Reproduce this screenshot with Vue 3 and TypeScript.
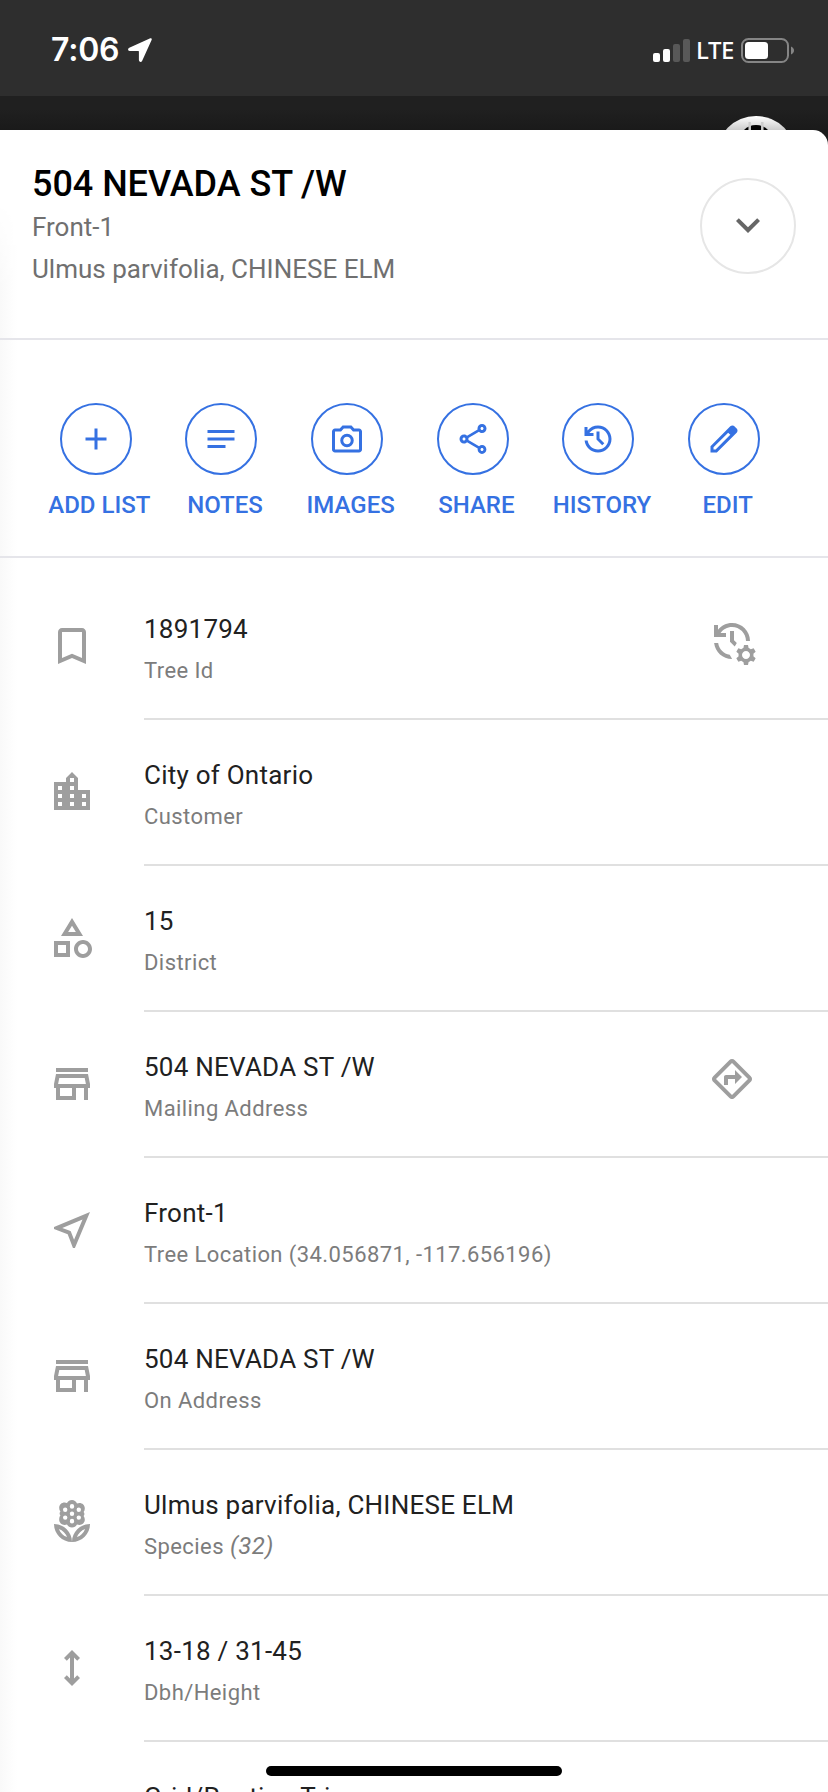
<script setup lang="ts">
interface Action {
  label: string
  icon: string
}

interface Row {
  icon: string
  value: string
  label: string
  note?: string
  trailing?: string
}

const icons: Record<string, string> = {
  add: 'M19 13h-6v6h-2v-6H5v-2h6V5h2v6h6v2z',
  notes: 'M21 11H3v2h18zM3 16h12v2H3zM21 6H3v2h18z',
  camera:
    'M12 17.5q1.875 0 3.188-1.312Q16.5 14.875 16.5 13q0-1.875-1.312-3.188Q13.875 8.5 12 8.5q-1.875 0-3.188 1.312Q7.5 11.125 7.5 13q0 1.875 1.312 3.188Q10.125 17.5 12 17.5Zm0-2q-1.05 0-1.775-.725Q9.5 14.05 9.5 13q0-1.05.725-1.775.725-.725 1.775-.725 1.05 0 1.775.725.725.725.725 1.775 0 1.05-.725 1.775-.725.725-1.775.725ZM4 21q-.825 0-1.412-.587Q2 19.825 2 19V7q0-.825.588-1.412Q3.175 5 4 5h3.15L9 3h6l1.85 2H20q.825 0 1.413.588Q22 6.175 22 7v12q0 .825-.587 1.413Q20.825 21 20 21Zm0-2h16V7h-4.05l-1.825-2h-4.25L8.05 7H4v12Z',
  share:
    'M18 16.08c-.76 0-1.44.3-1.96.77L8.91 12.7c.05-.23.09-.46.09-.7s-.04-.47-.09-.7l7.05-4.11c.54.5 1.25.81 2.04.81 1.66 0 3-1.34 3-3s-1.34-3-3-3-3 1.34-3 3c0 .24.04.47.09.7L8.04 9.81C7.5 9.31 6.79 9 6 9c-1.66 0-3 1.34-3 3s1.34 3 3 3c.79 0 1.5-.31 2.04-.81l7.12 4.16c-.05.21-.08.43-.08.65 0 1.61 1.31 2.92 2.92 2.92s2.92-1.31 2.92-2.92-1.31-2.92-2.92-2.92zM18 4c.55 0 1 .45 1 1s-.45 1-1 1-1-.45-1-1 .45-1 1-1zM6 13c-.55 0-1-.45-1-1s.45-1 1-1 1 .45 1 1-.45 1-1 1zm12 7.02c-.55 0-1-.45-1-1s.45-1 1-1 1 .45 1 1-.45 1-1 1z',
  history:
    'M12 3C9.17 3 6.65 4.32 5 6.36V4H3v6h6V8H6.26C7.53 6.19 9.63 5 12 5c3.86 0 7 3.14 7 7s-3.14 7-7 7c-3.53 0-6.43-2.61-6.92-6H3.06c.5 4.5 4.31 8 8.94 8 4.97 0 9-4.03 9-9s-4.03-9-9-9zM11 7v5.4l3.8 3.8 1.4-1.4-3.2-3.2V7z',
  edit:
    'M5 19h1.425L16.2 9.225 14.775 7.8 5 17.575ZM3 21v-4.25L16.2 3.575q.3-.275.663-.425.362-.15.762-.15t.775.15q.375.15.65.45L20.425 5q.3.275.437.65.138.375.138.75 0 .4-.138.763-.137.362-.437.662L7.25 21Z',
  bookmark:
    'M17 3H7c-1.1 0-1.99.9-1.99 2L5 21l7-3 7 3V5c0-1.1-.9-2-2-2zm0 15l-5-2.18L7 18V5h10v13z',
  city:
    'M15 11V5l-3-3-3 3v2H3v14h18V11h-6zm-8 8H5v-2h2v2zm0-4H5v-2h2v2zm0-4H5V9h2v2zm6 8h-2v-2h2v2zm0-4h-2v-2h2v2zm0-4h-2V9h2v2zm0-4h-2V5h2v2zm6 12h-2v-2h2v2zm0-4h-2v-2h2v2z',
  category:
    'M12 2l-5.5 9h11L12 2zm0 3.84L13.93 9h-3.87L12 5.84zM17.5 13c-2.49 0-4.5 2.01-4.5 4.5s2.01 4.5 4.5 4.5 4.5-2.01 4.5-4.5-2.01-4.5-4.5-4.5zm0 7c-1.38 0-2.5-1.12-2.5-2.5s1.12-2.5 2.5-2.5 2.5 1.12 2.5 2.5-1.12 2.5-2.5 2.5zM3 21.5h8v-8H3v8zm2-6h4v4H5v-4z',
  store:
    'M18.36 9l.6 3H5.04l.6-3h12.72M20 4H4v2h16V4zm0 3H4l-1 5v2h1v6h10v-6h4v6h2v-6h1v-2l-1-5zM6 18v-4h6v4H6z',
  near:
    'M17.27 6.73l-4.24 10.13-1.32-3.42-.32-.83-.82-.32-3.43-1.33 10.13-4.23M21 3L3 10.53v.98l6.84 2.65L12.48 21h.98L21 3z',
  florist:
    'M12 22c4.97 0 9-4.03 9-9-4.97 0-9 4.03-9 9zm2.44-2.44c.71-1.9 2.22-3.42 4.12-4.12-.71 1.9-2.22 3.41-4.12 4.12zM3 13c0 4.97 4.03 9 9 9 0-4.97-4.03-9-9-9zm2.44 2.44c1.9.71 3.42 2.22 4.12 4.12-1.9-.71-3.41-2.22-4.12-4.12zM5.6 10.75c0 1.6 1.2 2.7 2.7 2.7.4 0 .8-.1 1.2-.25.5.9 1.4 1.5 2.5 1.5s2-.6 2.5-1.5c.4.15.8.25 1.2.25 1.5 0 2.7-1.1 2.7-2.7 0-.7-.2-1.3-.6-1.8.3-.3.4-.6.4-.95s-.1-.65-.4-.95c.4-.5.6-1.1.6-1.8 0-1.6-1.2-2.7-2.7-2.7-.4 0-.8.1-1.2.25C14 1.6 13.1 1 12 1s-2 .6-2.5 1.5c-.4-.15-.8-.25-1.2-.25-1.5 0-2.7 1.1-2.7 2.7 0 .7.2 1.3.6 1.8-.3.3-.4.6-.4.95s.1.65.4.95c-.4.5-.6 1.1-.6 1.8zM12 3a1.1 1.2 0 1 0 0 2.4a1.1 1.2 0 1 0 0-2.4zM12 10.4a1.1 1.2 0 1 0 0 2.4a1.1 1.2 0 1 0 0-2.4zM12 6.8a1.1 1.1 0 1 0 0 2.2a1.1 1.1 0 1 0 0-2.2zM8.6 4.8a1.1 1.1 0 1 0 0 2.2a1.1 1.1 0 1 0 0-2.2zM15.4 4.8a1.1 1.1 0 1 0 0 2.2a1.1 1.1 0 1 0 0-2.2zM8.6 8.7a1.1 1.1 0 1 0 0 2.2a1.1 1.1 0 1 0 0-2.2zM15.4 8.7a1.1 1.1 0 1 0 0 2.2a1.1 1.1 0 1 0 0-2.2z',
  height:
    'M12 21l-4-4 1.4-1.4 1.6 1.6V6.8L9.4 8.4 8 7l4-4 4 4-1.4 1.4L13 6.8v10.4l1.6-1.6L16 17Z',
  manage:
    'M22.69 18.37l1.14-1-1-1.73-1.45.49c-.32-.27-.68-.48-1.08-.63L20 14h-2l-.3 1.49c-.4.15-.76.36-1.08.63l-1.45-.49-1 1.73 1.14 1c-.08.5-.08.76 0 1.26l-1.14 1 1 1.73 1.45-.49c.32.27.68.48 1.08.63L18 24h2l.3-1.49c.4-.15.76-.36 1.08-.63l1.45.49 1-1.73-1.14-1c.08-.51.08-.77 0-1.27zM19 21c-1.1 0-2-.9-2-2s.9-2 2-2 2 .9 2 2-.9 2-2 2zM11 7v5.41l2.36 2.36 1.04-1.79L13 11.59V7h-2zM21 12c0-4.97-4.03-9-9-9-2.83 0-5.35 1.32-7 3.36V4H3v6h6V8H6.26C7.53 6.19 9.63 5 12 5c3.86 0 7 3.14 7 7h2zM10.86 18.91C7.87 18.42 5.51 16.01 5.08 13H3.06c.5 4.5 4.31 8 8.94 8h.07l-1.21-2.09z',
  directions:
    'M8 15h2v-3h3.5v2.5L17 11l-3.5-3.5V10H9q-.425 0-.712.287Q8 10.575 8 11Zm4 7q-.375 0-.737-.15-.363-.15-.663-.45l-8-8q-.3-.3-.45-.663Q2 12.375 2 12t.15-.738q.15-.362.45-.662l8-8q.3-.3.663-.45Q11.625 2 12 2t.738.15q.362.15.662.45l8 8q.3.3.45.662.15.363.15.738t-.15.737q-.15.363-.45.663l-8 8q-.3.3-.662.45-.363.15-.738.15ZM12 20l8-8-8-8-8 8Z',
  chevron: 'M16.59 8.59L12 13.17 7.41 8.59 6 10l6 6 6-6z',
}

const actions: Action[] = [
  { label: 'ADD LIST', icon: 'add' },
  { label: 'NOTES', icon: 'notes' },
  { label: 'IMAGES', icon: 'camera' },
  { label: 'SHARE', icon: 'share' },
  { label: 'HISTORY', icon: 'history' },
  { label: 'EDIT', icon: 'edit' },
]

const rows: Row[] = [
  { icon: 'bookmark', value: '1891794', label: 'Tree Id', trailing: 'manage' },
  { icon: 'city', value: 'City of Ontario', label: 'Customer' },
  { icon: 'category', value: '15', label: 'District' },
  { icon: 'store', value: '504 NEVADA ST /W', label: 'Mailing Address', trailing: 'directions' },
  { icon: 'near', value: 'Front-1', label: 'Tree Location (34.056871, -117.656196)' },
  { icon: 'store', value: '504 NEVADA ST /W', label: 'On Address' },
  { icon: 'florist', value: 'Ulmus parvifolia, CHINESE ELM', label: 'Species', note: '(32)' },
  { icon: 'height', value: '13-18 / 31-45', label: 'Dbh/Height' },
  { icon: '', value: 'Grid/Routing Trim', label: '' },
]
</script>

<template>
  <div class="phone">
    <header class="status">
      <div class="clock">
        <span class="time">7:06</span>
        <svg class="locate" viewBox="0 0 24 24">
          <path d="M22.3.3L1.3 9.8C-.5 10.6-.3 12.9 1.7 12.9h8.7c.3 0 .5.2.5.5v8.7c0 2 2.4 2.6 3.3.7l9.4-20.7C24.2.9 23.3-.1 22.3.3z" />
        </svg>
      </div>
      <div class="signals">
        <svg class="bars" viewBox="0 0 37 23">
          <rect x="0" y="14" width="7" height="9" rx="2" />
          <rect x="10" y="10" width="7" height="13" rx="2" />
          <rect class="dim" x="20" y="5" width="7" height="18" rx="2" />
          <rect class="dim" x="30" y="0" width="7" height="23" rx="2" />
        </svg>
        <span class="lte">LTE</span>
        <svg class="battery" viewBox="0 0 53 25">
          <rect class="shell" x="1" y="1" width="46" height="23" rx="6.5" />
          <rect x="4" y="4" width="23" height="17" rx="3.5" />
          <path class="nub" d="M50 8.5c4 1.5 4 6.5 0 8z" />
        </svg>
      </div>
    </header>

    <div class="backdrop">
      <div class="avatar">
        <svg viewBox="0 0 80 80">
          <circle cx="40" cy="26" r="17" />
          <path d="M33.700 6v40M46.300 6v40" />
        </svg>
      </div>
    </div>

    <main class="sheet">
      <section class="head">
        <div class="titles">
          <h1>504 NEVADA ST /W</h1>
          <p>Front-1</p>
          <p>Ulmus parvifolia, CHINESE ELM</p>
        </div>
        <button class="collapse" aria-label="Collapse">
          <svg viewBox="0 0 24 24"><path :d="icons.chevron" /></svg>
        </button>
      </section>

      <nav class="actions">
        <div v-for="a in actions" :key="a.label" class="action">
          <span class="ring">
            <svg viewBox="0 0 24 24"><path :d="icons[a.icon]" fill-rule="evenodd" /></svg>
          </span>
          <span class="caption">{{ a.label }}</span>
        </div>
      </nav>

      <ul class="list">
        <li v-for="(r, i) in rows" :key="i" class="row">
          <svg class="lead" viewBox="0 0 24 24"><path :d="icons[r.icon] || ''" fill-rule="evenodd" /></svg>
          <div class="body">
            <div class="text">
              <span class="value">{{ r.value }}</span>
              <span class="label">{{ r.label }}<em v-if="r.note">{{ r.note }}</em></span>
            </div>
            <svg v-if="r.trailing" class="trail" viewBox="0 0 24 24">
              <path :d="icons[r.trailing]" fill-rule="evenodd" />
            </svg>
          </div>
        </li>
      </ul>
    </main>
    <div class="home"></div>
  </div>
</template>

<style>
html,
body {
  margin: 0;
  overflow: hidden;
}
</style>

<style scoped>
.phone {
  position: relative;
  display: flex;
  flex-direction: column;
  width: 828px;
  height: 1792px;
  overflow: hidden;
  background: #1b1b1b;
  font-family: Roboto, 'Liberation Sans', sans-serif;
}
svg {
  display: block;
  flex: none;
}
.status {
  display: flex;
  justify-content: space-between;
  box-sizing: border-box;
  height: 96px;
  padding: 0 34px 0 50px;
  background: #2e2e2e;
  color: #fff;
  font-family: Inter, sans-serif;
}
.clock,
.signals {
  display: flex;
  align-items: center;
  height: 100px;
}
.time {
  width: 77px;
  padding-left: 1px;
  font-size: 32px;
  font-weight: 600;
  line-height: 40px;
  letter-spacing: -0.2px;
}
.locate {
  width: 24px;
  height: 24px;
  fill: #fff;
}
.bars {
  width: 37px;
  height: 23px;
  margin-right: 6px;
  fill: #fff;
}
.bars .dim {
  fill: #585858;
}
.lte {
  width: 45px;
  font-family: 'Noto Sans', sans-serif;
  font-size: 24px;
  font-weight: 500;
  line-height: 30px;
  letter-spacing: -0.4px;
}
.battery {
  width: 53px;
  height: 25px;
  fill: #fff;
}
.battery .shell {
  fill: none;
  stroke: #858585;
  stroke-width: 2;
}
.battery .nub {
  fill: #858585;
}
.backdrop {
  display: flex;
  justify-content: flex-end;
  box-sizing: border-box;
  height: 34px;
  padding: 20px 32px 0 0;
  background: linear-gradient(#202020 40%, #1a1a1a);
}
.avatar {
  width: 80px;
  height: 80px;
  border-radius: 50%;
  background: linear-gradient(#fff, #ccc 14px);
}
.avatar circle {
  fill: #000;
}
.avatar path {
  fill: none;
  stroke: #ccc;
  stroke-width: 2.5;
}
.sheet {
  position: relative;
  flex: 1;
  overflow: hidden;
  border-top-right-radius: 15px;
  background: #fff;
}
.sheet::before {
  content: '';
  position: absolute;
  top: 70px;
  bottom: 0;
  left: 0;
  width: 17px;
  background: linear-gradient(90deg, #f9f9f9, #fff);
  -webkit-mask-image: linear-gradient(transparent, #000 90px);
  mask-image: linear-gradient(transparent, #000 90px);
}
.head {
  position: relative;
  display: flex;
  justify-content: space-between;
  box-sizing: border-box;
  height: 210px;
  padding: 32px 32px 0;
  border-bottom: 2px solid #e5e5ea;
}
h1 {
  margin: 1px 0 0;
  font-size: 36px;
  font-weight: 500;
  line-height: 42px;
  letter-spacing: -0.05px;
  color: #000;
}
.titles p {
  margin: 2px 0 0;
  font-size: 26px;
  line-height: 40px;
  color: #707070;
}
.collapse {
  display: flex;
  align-items: center;
  justify-content: center;
  box-sizing: border-box;
  width: 96px;
  height: 96px;
  margin-top: 16px;
  padding: 0 0 2px;
  border: 2px solid #e6e6e6;
  border-radius: 50%;
  background: #fff;
}
.collapse svg {
  width: 48px;
  height: 48px;
  fill: #666;
}
.actions {
  position: relative;
  display: grid;
  grid-template-columns: repeat(6, 1fr);
  box-sizing: border-box;
  height: 218px;
  padding: 63px 41px 0 33px;
  border-bottom: 2px solid #e5e5ea;
}
.action {
  display: flex;
  flex-direction: column;
  align-items: center;
  color: #3571e2;
}
.ring {
  display: flex;
  align-items: center;
  justify-content: center;
  box-sizing: border-box;
  width: 72px;
  height: 72px;
  border: 2px solid currentColor;
  border-radius: 50%;
}
.ring svg {
  width: 36px;
  height: 36px;
  fill: currentColor;
}
.caption {
  margin-top: 14px;
  padding-left: 7px;
  font-size: 24px;
  font-weight: 500;
  line-height: 32px;
  white-space: nowrap;
}
.list {
  position: relative;
  margin: 0;
  padding: 16px 0 0;
  list-style: none;
}
.row {
  display: flex;
  height: 146px;
}
.lead {
  width: 48px;
  height: 48px;
  margin: 48px 48px 0;
  fill: #9e9e9e;
}
.body {
  display: flex;
  flex: 1;
  justify-content: space-between;
  box-sizing: border-box;
  padding-right: 72px;
  border-bottom: 2px solid #e0e0e0;
}
.text {
  display: flex;
  flex-direction: column;
  padding-top: 37px;
  white-space: nowrap;
}
.value {
  font-size: 26px;
  line-height: 36px;
  letter-spacing: 0.24px;
  color: #212121;
}
.label {
  margin-top: 5px;
  font-size: 22px;
  line-height: 38px;
  letter-spacing: 0.42px;
  color: #7c7c7c;
}
.label em {
  margin-left: 6px;
  font-size: 24px;
  line-height: 1;
}
.trail {
  width: 48px;
  height: 48px;
  margin-top: 43px;
  fill: #9e9e9e;
}
.home {
  position: absolute;
  bottom: 16px;
  left: 266px;
  width: 296px;
  height: 10px;
  border-radius: 5px;
  background: #000;
}
</style>
